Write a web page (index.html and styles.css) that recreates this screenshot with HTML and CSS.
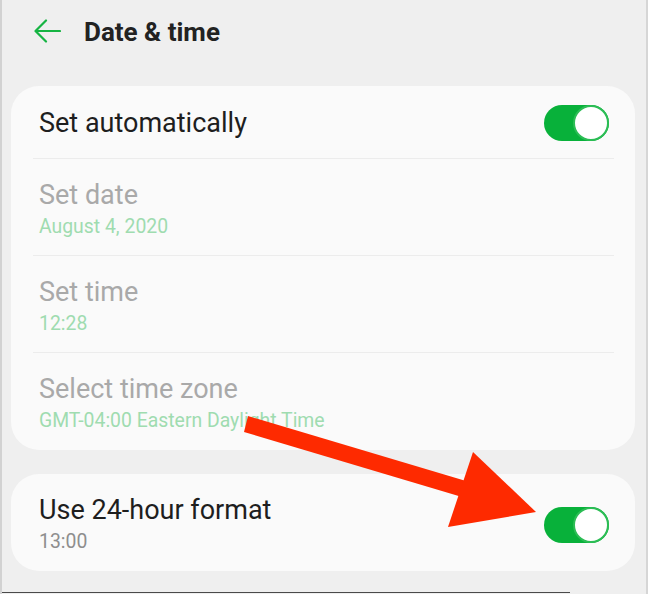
FILE: index.html
```html
<!DOCTYPE html>
<html>
<head>
<meta name="viewport" content="width=device-width, initial-scale=1">
<link rel="stylesheet" href="styles.css">
</head>
<body>

<div class="screen">

  <div class="topbar">
    <svg class="back" width="28" height="26" viewBox="0 0 28 26">
      <path d="M27 13 H3 M13 2.5 L2.5 13 L13 23.5" fill="none" stroke="#16b443" stroke-width="2.2" stroke-linecap="round" stroke-linejoin="round"/>
    </svg>
    <span class="title">Date &amp; time</span>
  </div>

  <div class="card">
    <div class="row row-first">
      <div class="label">
        <div class="name">Set automatically</div>
      </div>
      <span class="toggle"></span>
    </div>
    <div class="divider"></div>
    <div class="row">
      <div class="label">
        <div class="name off">Set date</div>
        <div class="value">August 4, 2020</div>
      </div>
    </div>
    <div class="divider"></div>
    <div class="row">
      <div class="label">
        <div class="name off">Set time</div>
        <div class="value">12:28</div>
      </div>
    </div>
    <div class="divider"></div>
    <div class="row row-end">
      <div class="label">
        <div class="name off">Select time zone</div>
        <div class="value">GMT-04:00 Eastern Daylight Time</div>
      </div>
    </div>
  </div>

  <div class="card card-gap">
    <div class="row row-end">
      <div class="label">
        <div class="name">Use 24-hour format</div>
        <div class="value grey">13:00</div>
      </div>
      <span class="toggle"></span>
    </div>
  </div>

  <div class="shot-edge"></div>

  <!-- red callout arrow drawn on top of the screenshot -->
  <svg class="callout" width="648" height="594" viewBox="0 0 648 594">
    <polygon points="248,416 244,432 462,497 466,481" fill="#fe2a00"/>
    <polygon points="473,452 448,527 536,512" fill="#fe2a00"/>
  </svg>

</div>

</body>
</html>
```

FILE: styles.css
```css
body {
    margin: 0;
    background-color: #efefef;
    font-family: Roboto, "Noto Sans", Arial, sans-serif;
}

.screen {
    position: relative;
    width: 648px;
    height: 594px;
    box-sizing: border-box;
    border-left: 2px solid #d2d2d2;
    border-right: 2px solid #d6d6d6;
    overflow: hidden;
}

/* Top bar with back arrow */
.topbar {
    height: 64px;
    display: flex;
    align-items: center;
    padding-left: 31px;
}

.back {
    display: block;
    margin-top: -2px;
}

.title {
    margin-left: 23px;
    font-size: 26px;
    line-height: 30px;
    font-weight: 700;
    color: #222222;
}

/* Settings cards */
.card {
    margin: 22px 0 0 9px;
    width: 624px;
    background-color: #fafafa;
    border-radius: 28px;
}

.card-gap {
    margin-top: 24px;
}

.row {
    display: flex;
    align-items: center;
    padding: 21px 26px 16px 28px;
}

.row-first {
    padding-top: 19px;
    padding-bottom: 17px;
}

.row-end {
    padding-bottom: 17px;
}

.label {
    flex: 1;
}

.name {
    font-size: 27px;
    line-height: 30px;
    color: #1e1e1e;
}

.name.off {
    color: #a9a9a9;
}

.value {
    margin-top: 5px;
    font-size: 19.4px;
    line-height: 24px;
    color: #9fdcb0;
}

.value.grey {
    color: #8e8e8e;
}

.divider {
    height: 1px;
    margin: 0 21px 0 22px;
    background-color: #ececec;
}

/* Switch, always on */
.toggle {
    position: relative;
    width: 65px;
    height: 36px;
    border-radius: 18px;
    background-color: #08b13a;
}

.toggle::after {
    content: "";
    position: absolute;
    right: 0;
    top: 0;
    width: 36px;
    height: 36px;
    box-sizing: border-box;
    border: 2px solid #2cbd55;
    border-radius: 50%;
    background-color: #ffffff;
}

.shot-edge {
    width: 568px;
    height: 1px;
    margin-top: 21px;
    background-color: #4a4a4a;
}

.callout {
    position: absolute;
    left: -2px;
    top: 0;
    pointer-events: none;
}
```
